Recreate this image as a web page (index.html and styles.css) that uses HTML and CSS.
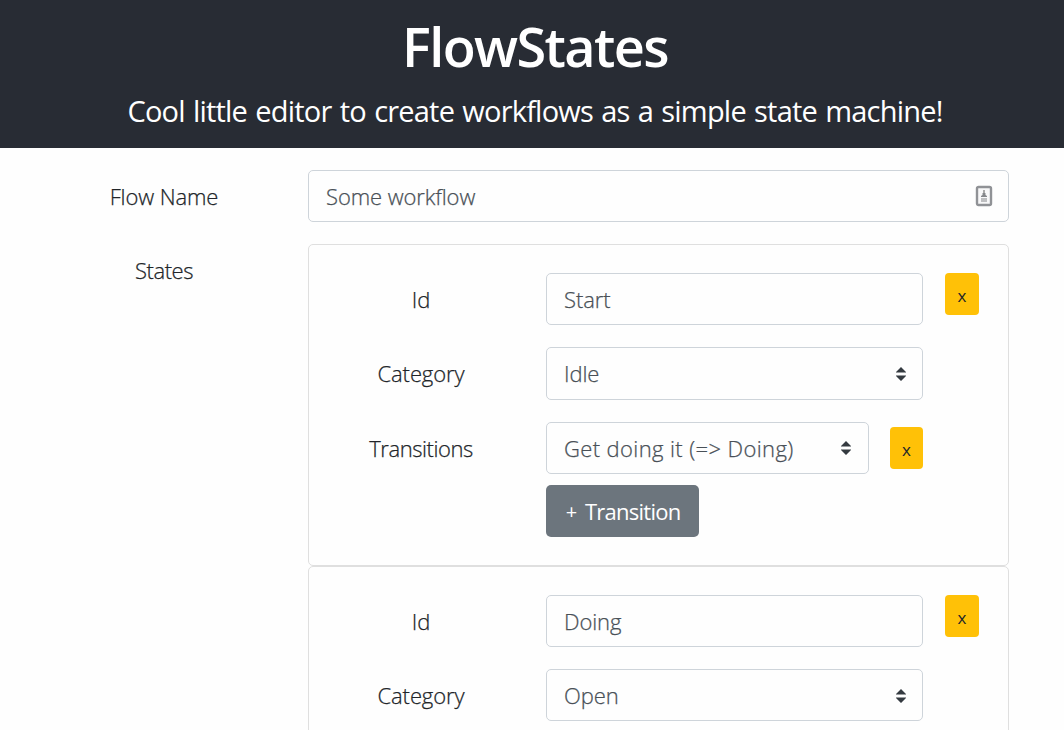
FILE: index.html
```html
<!DOCTYPE html>
<html lang="en">
<head>
<meta charset="utf-8">
<title>FlowStates</title>
<link rel="stylesheet" href="styles.css">
</head>
<body>
<header class="header">
  <h1 class="title">FlowStates</h1>
  <p class="subtitle">Cool little editor to create workflows as a simple state machine!</p>
</header>
<main class="form">
  <label class="label" for="flow-name">Flow Name</label>
  <div class="control">
    <input class="field" id="flow-name" value="Some workflow">
    <svg class="contact" width="18" height="22" viewBox="0 0 18 22">
      <rect x="2" y="2" width="14" height="18" rx="1.5" fill="#f8f8f9" stroke="#909296" stroke-width="2.4"/>
      <path d="M9 5v3" stroke="#aaa" stroke-width="2"/>
      <path d="M7.5 8h3v2l1.5 1v1H6v-1l1.500-1z" fill="#85878b"/>
      <path d="M6 14h6M6 16h6" stroke="#aaacaf" stroke-width="1.6"/>
    </svg>
  </div>
  <div class="label tight">States</div>
  <div class="states">
    <section class="card">
      <label class="label" for="id-1">Id</label>
      <input class="field" id="id-1" value="Start">
      <button class="remove">x</button>
      <label class="label" for="cat-1">Category</label>
      <div class="control tall">
        <select class="field" id="cat-1"><option>Idle</option></select>
        <svg class="carets" width="12" height="16" viewBox="0 0 12 16"><path d="M6 1l5 5H1zM6 15l5-5H1z" fill="#343a40"/><path d="M1 6.5h10M1 9.5h10" stroke="#343a40" stroke-opacity=".5"/></svg>
      </div>
      <span></span>
      <label class="label tight" for="tr-1">Transitions</label>
      <div class="transitions">
        <div class="transition">
          <div class="control">
            <select class="field wide" id="tr-1"><option>Get doing it (=&gt; Doing)</option></select>
            <svg class="carets" width="12" height="16" viewBox="0 0 12 16"><path d="M6 1l5 5H1zM6 15l5-5H1z" fill="#343a40"/><path d="M1 6.5h10M1 9.5h10" stroke="#343a40" stroke-opacity=".5"/></svg>
          </div>
          <button class="remove small">x</button>
        </div>
        <button class="add"><span class="plus">+</span>Transition</button>
      </div>
    </section>
    <section class="card">
      <label class="label" for="id-2">Id</label>
      <input class="field" id="id-2" value="Doing">
      <button class="remove">x</button>
      <label class="label" for="cat-2">Category</label>
      <div class="control tall-icon">
        <select class="field" id="cat-2"><option>Open</option></select>
        <svg class="carets" width="12" height="16" viewBox="0 0 12 16"><path d="M6 1l5 5H1zM6 15l5-5H1z" fill="#343a40"/><path d="M1 6.5h10M1 9.5h10" stroke="#343a40" stroke-opacity=".5"/></svg>
      </div>
    </section>
  </div>
</main>
</body>
</html>
```
FILE: styles.css
```css
* { box-sizing: border-box; }
body {
  margin: 0;
  height: 730px;
  overflow: hidden;
  background: #fefefe;
  color: #212529;
  font: 340 22px/33px "Open Sans", "Noto Sans", sans-serif;
  letter-spacing: -0.1px;
}
.header {
  height: 148px;
  padding: 13px 0 0 6px;
  background: #282c34;
  color: #fff;
  text-align: center;
}
.title {
  margin: 0;
  font-size: 54px;
  line-height: 67px;
  font-weight: 600;
  letter-spacing: -1.6px;
}
.subtitle {
  margin: 10px 0 0;
  font-size: 29px;
  line-height: 42px;
  font-weight: 400;
  letter-spacing: -0.8px;
  word-spacing: 1.5px;
  white-space: nowrap;
}
.form {
  display: grid;
  grid-template-columns: 246px 701px;
  column-gap: 21px;
  row-gap: 22px;
  padding: 22px 0 0 41px;
}
.label {
  padding-top: 10px;
  text-align: center;
  white-space: nowrap;
  -webkit-text-stroke: 0.25px currentColor;
}
.tight { letter-spacing: -0.45px; }
.control { position: relative; }
.field {
  display: block;
  width: 100%;
  height: 52px;
  padding: 0 17px;
  border: 1px solid #ced4da;
  border-radius: 5px;
  background: #fefefe;
  color: #495057;
  font: inherit;
  letter-spacing: -0.1px;
  appearance: none;
  outline: none;
  -webkit-text-stroke: 0.25px currentColor;
}
.field.wide { letter-spacing: 0.38px; }
.tall .field { height: 53px; }
.contact { position: absolute; right: 16px; top: 15px; }
.carets { position: absolute; right: 17px; top: 18px; }
.tall .carets,
.tall-icon .carets { right: 16px; top: 19px; }
.card {
  display: grid;
  grid-template-columns: 224px 390px 56px;
  row-gap: 22px;
  align-items: start;
  padding: 28px 0;
  border: 1px solid #dfdfdf;
  border-radius: 5px;
}
.card > .field,
.card > .control,
.card > .transitions { margin-left: 13px; width: 377px; }
.remove {
  width: 34px;
  height: 42px;
  padding: 4px 0 0;
  border: 0;
  border-radius: 4px;
  background: #ffc107;
  color: #212529;
  font: 400 17px/28px "Open Sans", sans-serif;
}
.card > .remove { margin-left: 22px; }
.transition {
  display: grid;
  grid-template-columns: 323px 33px;
  column-gap: 21px;
  align-items: center;
}
.remove.small { width: 33px; }
.add {
  display: flex;
  align-items: center;
  gap: 8px;
  width: 153px;
  height: 52px;
  margin-top: 11px;
  padding: 1px 0 0 19px;
  border: 0;
  border-radius: 5px;
  background: #6c757d;
  color: #fff;
  font: 400 22px/33px "Open Sans", sans-serif;
  letter-spacing: -0.75px;
  white-space: nowrap;
}
.plus { width: 12px; font-size: 20px; }
```
